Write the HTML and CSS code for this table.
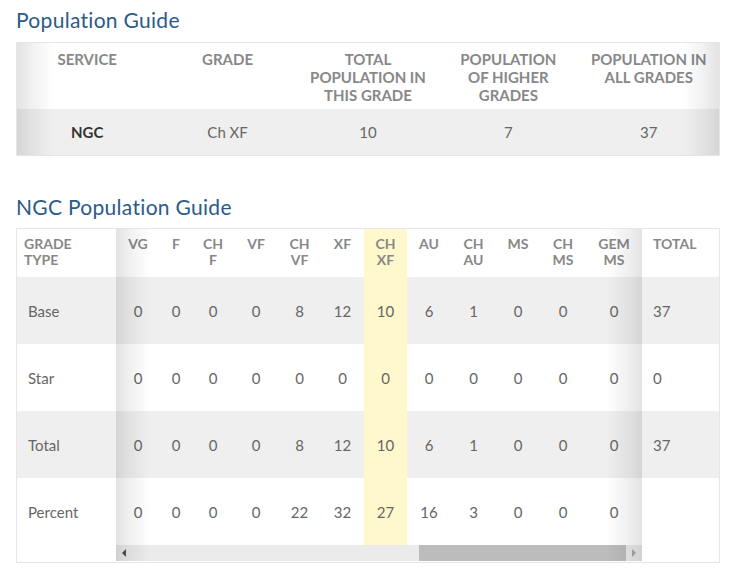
FILE: index.html
```html
<!DOCTYPE html>
<html lang="en">
<head>
<meta charset="utf-8">
<title>Population Guide</title>
<link rel="stylesheet" href="styles.css">
</head>
<body>
<div class="page">
  <h2 class="title">Population Guide</h2>
  <div class="card">
    <table class="summary">
      <thead>
        <tr>
          <th>SERVICE</th>
          <th>GRADE</th>
          <th>TOTAL<br>POPULATION IN<br>THIS GRADE</th>
          <th>POPULATION<br>OF HIGHER<br>GRADES</th>
          <th>POPULATION IN<br>ALL GRADES</th>
        </tr>
      </thead>
      <tbody>
        <tr>
          <td class="strong">NGC</td>
          <td>Ch XF</td>
          <td>10</td>
          <td>7</td>
          <td>37</td>
        </tr>
      </tbody>
    </table>
    <div class="shade shade-l"></div>
    <div class="shade shade-r"></div>
  </div>

  <h2 class="title title-2">NGC Population Guide</h2>
  <div class="card">
    <table class="grades">
      <colgroup>
        <col class="c-type">
        <col style="width:44px"><col style="width:32px"><col style="width:42px"><col style="width:44px">
        <col style="width:43px"><col style="width:43px"><col style="width:43px"><col style="width:44px">
        <col style="width:45px"><col style="width:44px"><col style="width:46px"><col style="width:56px">
        <col class="c-total">
      </colgroup>
      <thead>
        <tr>
          <th class="type">GRADE<br>TYPE</th>
          <th>VG</th><th>F</th><th>CH<br>F</th><th>VF</th><th>CH<br>VF</th><th>XF</th>
          <th class="hl">CH<br>XF</th>
          <th>AU</th><th>CH<br>AU</th><th>MS</th><th>CH<br>MS</th><th>GEM<br>MS</th>
          <th class="total">TOTAL</th>
        </tr>
      </thead>
      <tbody>
        <tr class="alt">
          <td class="type">Base</td>
          <td>0</td><td>0</td><td>0</td><td>0</td><td>8</td><td>12</td><td class="hl">10</td>
          <td>6</td><td>1</td><td>0</td><td>0</td><td>0</td><td class="total">37</td>
        </tr>
        <tr>
          <td class="type">Star</td>
          <td>0</td><td>0</td><td>0</td><td>0</td><td>0</td><td>0</td><td class="hl">0</td>
          <td>0</td><td>0</td><td>0</td><td>0</td><td>0</td><td class="total">0</td>
        </tr>
        <tr class="alt">
          <td class="type">Total</td>
          <td>0</td><td>0</td><td>0</td><td>0</td><td>8</td><td>12</td><td class="hl">10</td>
          <td>6</td><td>1</td><td>0</td><td>0</td><td>0</td><td class="total">37</td>
        </tr>
        <tr>
          <td class="type">Percent</td>
          <td>0</td><td>0</td><td>0</td><td>0</td><td>22</td><td>32</td><td class="hl">27</td>
          <td>16</td><td>3</td><td>0</td><td>0</td><td>0</td><td class="total"></td>
        </tr>
        <tr class="bar-row">
          <td class="type"></td>
          <td colspan="12" class="bar-cell">
            <div class="scrollbar">
              <span class="sb-btn"><span class="tri tri-l"></span></span>
              <span class="sb-track"><span class="sb-thumb"></span></span>
              <span class="sb-btn"><span class="tri tri-r"></span></span>
            </div>
          </td>
          <td class="total"></td>
        </tr>
      </tbody>
    </table>
    <div class="shade shade-sl"></div>
    <div class="shade shade-sr"></div>
  </div>
</div>
</body>
</html>
```

FILE: styles.css
```css
* { box-sizing: border-box; }

body {
  margin: 0;
  background: #ffffff;
  font-family: Lato, "Open Sans", Arial, sans-serif;
  color: #666;
}

.page {
  padding: 8px 0 0 16px;
  width: 720px;
}

.title {
  margin: 0 0 10px;
  font-size: 21px;
  line-height: 24px;
  font-weight: 400;
  letter-spacing: 0.3px;
  color: #2b5b87;
}

.title-2 {
  margin-top: 39px;
  margin-bottom: 9px;
}

.card {
  position: relative;
  width: 704px;
  border: 1px solid #e6e6e6;
}

table {
  width: 100%;
  border-collapse: collapse;
  table-layout: fixed;
}

/* ---- summary table ---- */
.summary th {
  height: 66px;
  padding: 7px 4px 0;
  vertical-align: top;
  text-align: center;
  font-size: 15px;
  line-height: 18px;
  font-weight: 700;
  color: #888;
  background: #fff;
}

.summary td {
  height: 46px;
  text-align: center;
  vertical-align: middle;
  background: #efefef;
  font-size: 15px;
  color: #666;
}

.summary td.strong {
  font-weight: 700;
  color: #333;
}

/* ---- grades table ---- */
.c-type { width: 99px; }
.c-total { width: 77px; }

.grades th {
  height: 48px;
  padding: 7px 0 0;
  vertical-align: top;
  text-align: center;
  font-size: 14px;
  line-height: 16px;
  font-weight: 700;
  color: #888;
  background: #fff;
}

.grades td {
  height: 67px;
  padding: 0;
  text-align: center;
  vertical-align: middle;
  font-size: 15px;
  color: #666;
  background: #fff;
}

.grades tr.alt td { background: #efefef; }

.grades th.type { text-align: left; padding-left: 7px; }
.grades td.type { text-align: left; padding-left: 11px; }

.grades th.total { text-align: left; padding-left: 11px; }
.grades td.total { text-align: left; padding-left: 11px; }

.grades th.hl,
.grades td.hl,
.grades tr.alt td.hl { background: #fff8cc; }

.grades tr.bar-row td {
  height: 17px;
  background: #fff;
  vertical-align: top;
}

.grades td.bar-cell { padding: 0; }

.scrollbar {
  display: flex;
  height: 16px;
  background: #ebebeb;
}

.sb-btn {
  width: 16px;
  display: flex;
  align-items: center;
  justify-content: center;
}

.sb-track {
  flex: 1;
  display: flex;
  justify-content: flex-end;
}

.sb-thumb {
  width: 207px;
  height: 16px;
  background: #bcbcbc;
}

.tri {
  width: 0;
  height: 0;
  border-top: 4px solid transparent;
  border-bottom: 4px solid transparent;
}

.tri-l { border-right: 4px solid #505050; }
.tri-r { border-left: 4px solid #a8a8a8; }

/* ---- scroll shadows (overlays) ---- */
.shade {
  position: absolute;
  top: 0;
  bottom: 0;
  pointer-events: none;
}

.shade-l {
  left: 0;
  width: 36px;
  background: linear-gradient(to right, rgba(0,0,0,0.11), rgba(0,0,0,0.06) 40%, rgba(0,0,0,0));
}

.shade-r {
  right: 0;
  width: 36px;
  background: linear-gradient(to left, rgba(0,0,0,0.11), rgba(0,0,0,0.06) 40%, rgba(0,0,0,0));
}

.shade-sl {
  left: 99px;
  width: 34px;
  bottom: 1px;
  background: linear-gradient(to right, rgba(0,0,0,0.11), rgba(0,0,0,0.06) 40%, rgba(0,0,0,0));
}

.shade-sr {
  right: 77px;
  width: 36px;
  bottom: 1px;
  background: linear-gradient(to left, rgba(0,0,0,0.11), rgba(0,0,0,0.06) 40%, rgba(0,0,0,0));
}
```
